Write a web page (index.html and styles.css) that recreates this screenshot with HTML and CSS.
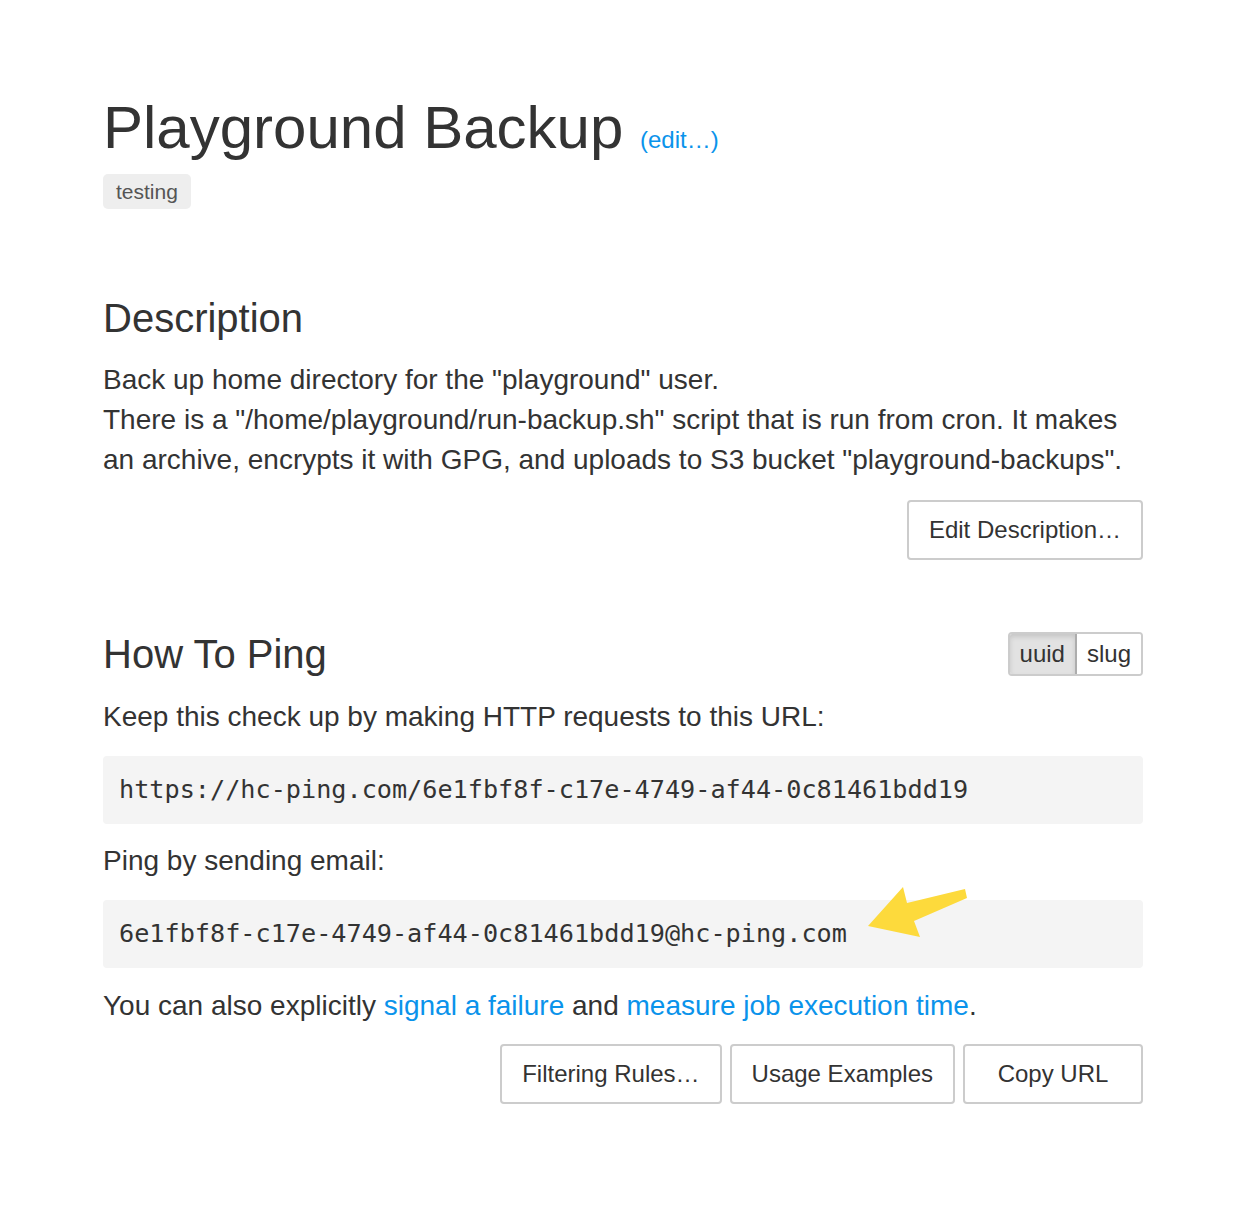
FILE: index.html
```html
<!DOCTYPE html>
<html>
<head>
<meta charset="utf-8">
<link rel="stylesheet" href="styles.css">
</head>
<body>
<div class="page">
  <h1 class="title">Playground Backup <a class="edit" href="#">(edit…)</a></h1>
  <div class="tags"><span class="tag">testing</span></div>

  <h2 class="section-title desc-title">Description</h2>
  <p class="desc">Back up home directory for the "playground" user.<br>There is a "/home/playground/run-backup.sh" script that is run from cron. It makes an archive, encrypts it with GPG, and uploads to S3 bucket "playground-backups".</p>
  <div class="actions actions-desc"><button class="btn">Edit Description…</button></div>

  <div class="ping-head">
    <h2 class="section-title">How To Ping</h2>
    <div class="toggle"><span class="tg active">uuid</span><span class="tg">slug</span></div>
  </div>
  <p class="text keep">Keep this check up by making HTTP requests to this URL:</p>
  <div class="code">https://hc-ping.com/6e1fbf8f-c17e-4749-af44-0c81461bdd19</div>
  <p class="text email-p">Ping by sending email:</p>
  <div class="code code-email">6e1fbf8f-c17e-4749-af44-0c81461bdd19@hc-ping.com<svg class="arrow" width="110" height="60" viewBox="0 0 110 60"><polygon points="5,46 40,7 44,23 102,9 104,18 51,41 57,57" fill="#fdda3c"/></svg></div>
  <p class="text also">You can also explicitly <a href="#">signal a failure</a> and <a href="#">measure job execution time</a>.</p>
  <div class="actions actions-ping">
    <button class="btn">Filtering Rules…</button>
    <button class="btn">Usage Examples</button>
    <button class="btn btn-copy">Copy URL</button>
  </div>
</div>
</body>
</html>
```

FILE: styles.css
```css
html, body {
  margin: 0;
  padding: 0;
  background: #fff;
}
body {
  font-family: "Liberation Sans", Arial, sans-serif;
  color: #333;
  font-size: 28px;
  line-height: 40px;
}
.page {
  width: 1040px;
  margin: 0 auto;
  padding-top: 95px;
  padding-bottom: 100px;
}
a {
  color: #0a93eb;
  text-decoration: none;
}
.title {
  margin: 0;
  font-size: 60px;
  line-height: 66px;
  font-weight: normal;
}
.edit {
  font-size: 24px;
  line-height: 24px;
}
.tags {
  margin-top: 9px;
  height: 35px;
}
.tag {
  display: inline-block;
  background: #eee;
  color: #555;
  font-size: 21px;
  line-height: 35px;
  padding: 0 13px;
  border-radius: 5px;
}
.section-title {
  margin: 0;
  font-size: 40px;
  line-height: 44px;
  font-weight: normal;
}
.desc-title {
  margin-top: 91px;
}
.desc {
  margin: 20px 0 0;
}
.actions {
  display: flex;
  justify-content: flex-end;
  gap: 8px;
}
.actions-desc {
  margin-top: 20px;
}
.btn {
  font-family: "Liberation Sans", Arial, sans-serif;
  font-size: 24px;
  line-height: 36px;
  padding: 10px 20px;
  border: 2px solid #ccc;
  border-radius: 4px;
  background: #fff;
  color: #333;
}
.btn-copy {
  min-width: 180px;
}
.ping-head {
  margin-top: 72px;
  display: flex;
  justify-content: space-between;
  align-items: center;
}
.toggle {
  display: flex;
  border: 2px solid #ccc;
  border-radius: 4px;
  overflow: hidden;
  font-size: 24px;
  line-height: 36px;
}
.tg {
  padding: 2px 10px;
  background: #fff;
}
.tg.active {
  background: #e2e2e2;
  box-shadow: inset 0 3px 5px rgba(0,0,0,0.125);
  border-right: 2px solid #adadad;
}
.text {
  margin: 0;
}
.keep {
  margin-top: 21px;
}
.code {
  position: relative;
  margin-top: 19px;
  background: #f4f4f4;
  border-radius: 4px;
  padding: 16px;
  font-family: "DejaVu Sans Mono", monospace;
  font-size: 25.2px;
  line-height: 36px;
  color: #333;
}
.email-p {
  margin-top: 17px;
}
.code-email {
  margin-top: 19px;
}
.arrow {
  position: absolute;
  left: 760px;
  top: -20px;
}
.also {
  margin-top: 18px;
}
.actions-ping {
  margin-top: 18px;
}
```
